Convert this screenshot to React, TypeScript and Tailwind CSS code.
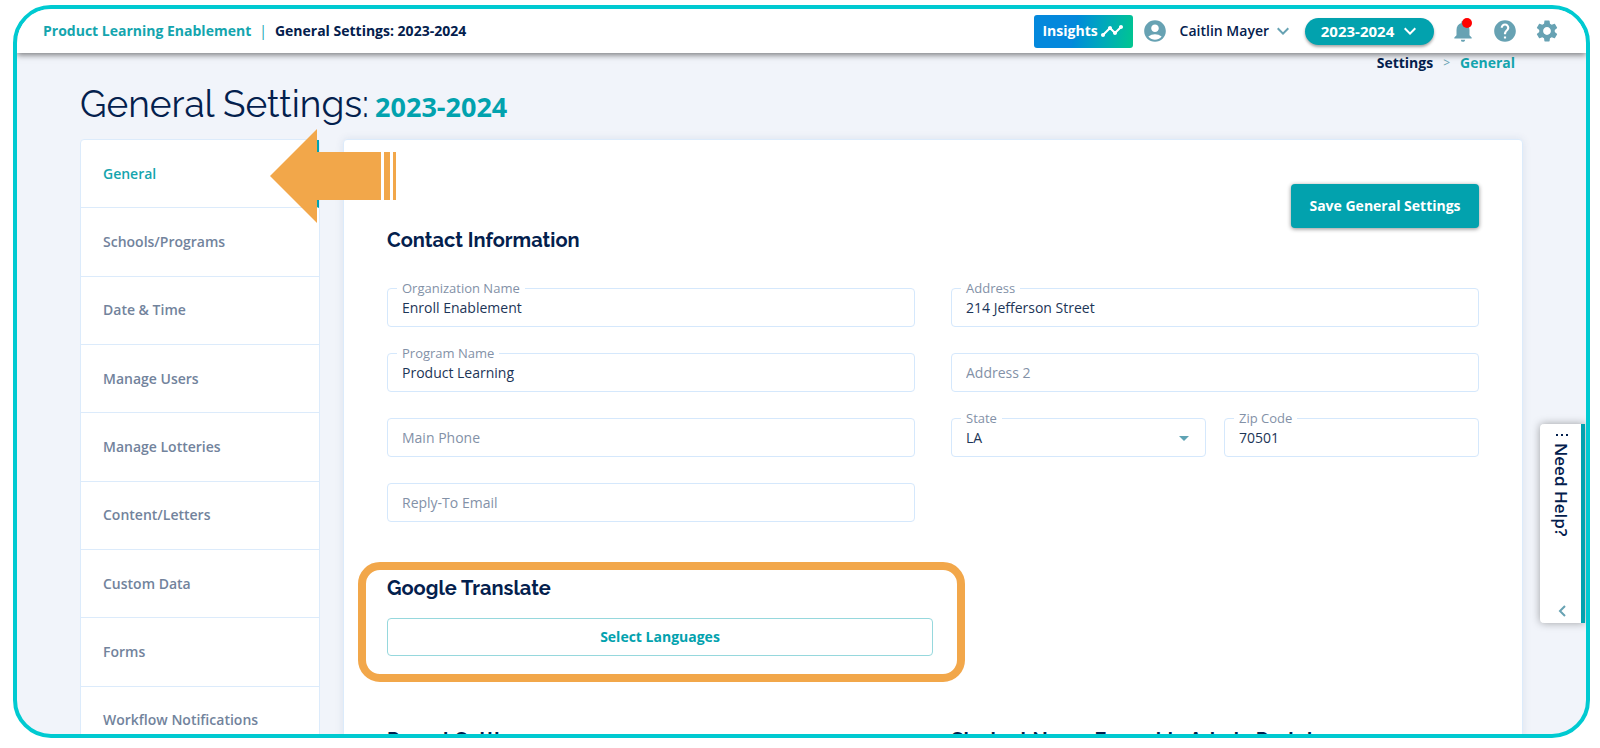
import type { ReactNode } from "react"
import {
  MdAccountCircle,
  MdArrowDropDown,
  MdHelp,
  MdKeyboardArrowDown,
  MdNotifications,
  MdSettings,
  MdTimeline,
} from "react-icons/md"

const navItems = [
  "General",
  "Schools/Programs",
  "Date & Time",
  "Manage Users",
  "Manage Lotteries",
  "Content/Letters",
  "Custom Data",
  "Forms",
  "Workflow Notifications",
]

function Header() {
  return (
    <header className="relative z-10 flex h-11 items-center justify-between bg-white px-[26px] shadow-[0_2px_6px_rgba(0,0,0,0.5)]">
      <div className="flex items-center gap-2 text-sm font-bold">
        <a href="#home" className="text-[#14a5ae]">Product Learning Enablement</a>
        <span className="font-normal text-[#14a5ae]">|</span>
        <span>General Settings: 2023-2024</span>
      </div>
      <div className="flex items-center">
        <button className="flex h-[33px] w-[99px] items-center justify-center gap-0.5 rounded-[3px] bg-linear-100 from-[#0488dc] from-40% to-[#06c68e] text-sm font-bold text-white">
          Insights
          <MdTimeline className="size-6" />
        </button>
        <button className="ml-[9px] flex items-center text-sm font-semibold">
          <MdAccountCircle className="mr-3 size-[26px] text-[#67a2b3]" />
          Caitlin Mayer
          <MdKeyboardArrowDown className="ml-0.5 size-6 text-[#67a2b3]" />
        </button>
        <button className="ml-[10px] flex h-[27px] w-[129px] items-center justify-center gap-1 rounded-full bg-[#02a2ae] pl-1 text-[15px] font-bold text-white shadow-[0_2px_3px_rgba(0,0,0,0.35)]">
          2023-2024
          <MdKeyboardArrowDown className="size-6" />
        </button>
        <div className="ml-4 flex items-center gap-4 text-[#67a2b3]">
          <button aria-label="Notifications" className="relative">
            <MdNotifications className="size-[26px]" />
            <span className="absolute top-0 right-1 size-[10px] rounded-full bg-[#ff0000]" />
          </button>
          <button aria-label="Help"><MdHelp className="size-[26px]" /></button>
          <button aria-label="Settings"><MdSettings className="size-[26px]" /></button>
        </div>
      </div>
    </header>
  )
}

function SideNav() {
  return (
    <nav className="grid h-[617px] w-60 shrink-0 auto-rows-fr rounded-t-[4px] border border-[#dcebfb] bg-white">
      {navItems.map((item, i) => (
        <a
          key={item}
          href="#section"
          className={
            i === 0
              ? "flex items-center border-r-2 border-b border-r-[#02a2ae] border-b-[#dcebfb] pl-[22px] text-sm font-semibold text-[#14a5ae]"
              : "flex items-center border-b border-[#dcebfb] pl-[22px] text-sm font-semibold text-[#72839c]"
          }
        >
          {item}
        </a>
      ))}
    </nav>
  )
}

function SectionTitle({ children }: { children: ReactNode }) {
  return <h2 className="font-['Raleway','Lato',sans-serif] text-xl leading-6 font-bold">{children}</h2>
}

type FieldProps = { id: string; label: string; value?: string; options?: string[] }

function Field({ id, label, value, options }: FieldProps) {
  const control = "h-[39px] w-full appearance-none rounded-[4px] border border-[#d5e8fc] bg-white px-[14px] text-sm text-[#1c3557] outline-none placeholder:text-[#8391a7]"
  return (
    <div className="relative min-w-0 flex-1">
      {options ? (
        <select id={id} defaultValue={value} className={control}>
          {options.map((option) => (
            <option key={option}>{option}</option>
          ))}
        </select>
      ) : (
        <input
          id={id}
          type="text"
          defaultValue={value}
          placeholder={value ? undefined : label}
          aria-label={label}
          className={control}
        />
      )}
      {options && <MdArrowDropDown className="pointer-events-none absolute top-2 right-[10px] size-6 text-[#5fa3b4]" />}
      {value && (
        <label
          htmlFor={id}
          className="absolute -top-2 left-[10px] bg-white px-[5px] text-[13px] leading-4 text-[#8391a7]"
        >
          {label}
        </label>
      )}
    </div>
  )
}

function ContactForm() {
  return (
    <div className="mt-9 grid grid-cols-2 gap-9">
      <div className="flex flex-col gap-[26px]">
        <Field id="org" label="Organization Name" value="Enroll Enablement" />
        <Field id="program" label="Program Name" value="Product Learning" />
        <Field id="phone" label="Main Phone" />
        <Field id="email" label="Reply-To Email" />
      </div>
      <div className="flex flex-col gap-[26px]">
        <div><Field id="address" label="Address" value="214 Jefferson Street" /></div>
        <div><Field id="address2" label="Address 2" /></div>
        <div className="flex gap-[18px]">
          <Field id="state" label="State" value="LA" options={["LA", "MS", "TX"]} />
          <Field id="zip" label="Zip Code" value="70501" />
        </div>
      </div>
    </div>
  )
}

function HelpTab() {
  return (
    <button className="absolute top-[415px] right-px flex h-[199px] w-[45px] items-center justify-between rounded-l-[4px] border-y-2 border-r-4 border-y-white border-r-[#02a2ae] bg-white pt-[10px] pb-1.5 text-[17px] font-semibold shadow-[0_0_8px_rgba(0,0,0,0.35)] [writing-mode:vertical-rl]">
      <span className="flex items-center gap-1.5">
        <svg viewBox="0 0 14 3" className="h-[3px] w-[14px] fill-current">
          <path d="M1 0h2v2H1zM6 0h2v2H6zM11 0h2v2h-2z" />
        </svg>
        Need Help?
      </span>
      <svg viewBox="0 0 12 12" className="size-3 fill-none stroke-[#67a2b3] stroke-2">
        <path d="M9 1 4 6l5 5" />
      </svg>
    </button>
  )
}

function Arrow() {
  return (
    <svg viewBox="0 0 126 94" className="absolute -top-[10px] left-[190px] z-10 h-[94px] w-[126px] fill-[#f2a74a]">
      <path d="M0 47 47 0v23h64v48H47v23zM114 23h6v48h-6zM123 23h3v48h-3z" />
    </svg>
  )
}

export default function App() {
  return (
    <div className="h-screen bg-white pt-[5px] pr-[10px] pb-[10px] pl-[13px] font-['Open_Sans',sans-serif] text-[#03204d]">
      <div className="relative h-full overflow-hidden rounded-[38px] border-4 border-[#00cad1] bg-[#f1f4fa]">
        <Header />
        <div className="px-[63px]">
          <div className="flex h-5 items-center justify-end gap-[10px] pr-2 text-sm font-bold">
            <a href="#settings">Settings</a>
            <span className="text-xs font-normal text-[#67a2b3]">&gt;</span>
            <a href="#general" className="text-[#14a5ae]">General</a>
          </div>
          <h1 className="mt-1 flex h-[62px] items-baseline gap-1.5 font-['Raleway','Lato',sans-serif] text-[37px] leading-[54px] font-normal">
            General Settings:
            <span className="font-['Open_Sans',sans-serif] text-[27px] font-bold text-[#02a2ae]">2023-2024</span>
          </h1>
          <div className="relative flex items-start gap-[23px]">
            <Arrow />
            <SideNav />
            <main className="min-w-0 flex-1 rounded-t-[4px] border border-[#dcebfb] bg-white px-[43px] pt-11 pb-10 shadow-[0_0_8px_rgba(30,70,120,0.1)]">
              <div className="flex justify-end">
                <button className="h-11 w-[188px] rounded-[4px] bg-[#02a2ae] text-sm font-bold text-white shadow-[0_1px_4px_rgba(0,0,0,0.45)]">
                  Save General Settings
                </button>
              </div>
              <SectionTitle>Contact Information</SectionTitle>
              <ContactForm />
              <section className="relative mt-[54px] w-1/2">
                <SectionTitle>Google Translate</SectionTitle>
                <button className="mt-[18px] h-[38px] w-full rounded-[4px] border border-[#96d8dd] text-sm font-bold text-[#02a2ae]">
                  Select Languages
                </button>
                <div className="pointer-events-none absolute -top-[14px] -right-8 -bottom-[26px] -left-[29px] rounded-[22px] border-8 border-[#f2a74a]" />
              </section>
              <div className="mt-[72px] grid grid-cols-2 gap-9">
                <SectionTitle>Parent Settings</SectionTitle>
                <SectionTitle>Student Name Format in Admin Portal</SectionTitle>
              </div>
            </main>
          </div>
        </div>
        <HelpTab />
      </div>
    </div>
  )
}
